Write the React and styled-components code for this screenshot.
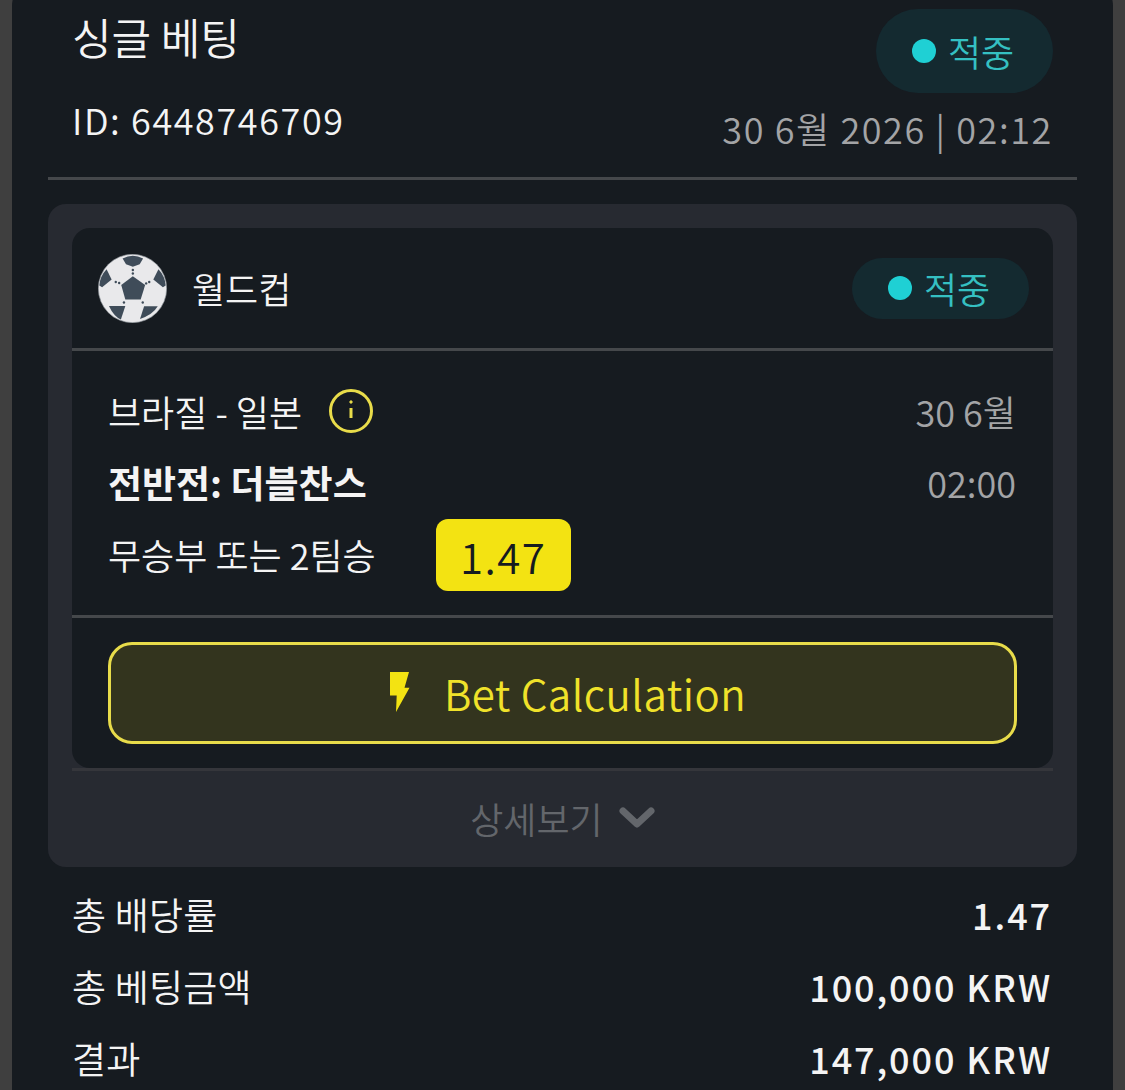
import React from 'react'
import styled, { createGlobalStyle } from 'styled-components'

const GlobalStyle = createGlobalStyle`
html, body {
  margin: 0;
  padding: 0;
  background: #3f3f3f;
}
* {
  box-sizing: border-box;
}
`
const Page = styled.div`
width: 1125px;
height: 1090px;
overflow: hidden;
padding: 0 12px;
font-family: "Noto Sans CJK KR", "Noto Sans", sans-serif;
font-weight: 350;
color: #f4f4f4;
`
const Ticket = styled.div`
margin-top: -24px;
height: 1200px;
padding: 24px 36px 0;
background: #161b20;
border-radius: 30px;
`
const Header = styled.header`
display: grid;
grid-template-columns: 1fr auto;
height: 180px;
padding: 0 24px 0 24px;
border-bottom: 3px solid #45484b;
`
const TitleBlock = styled.div`
display: flex;
flex-direction: column;
`
const Title = styled.h1`
margin: 6px 0 0;
height: 60px;
font-size: 43px;
line-height: 60px;
font-weight: 350;
`
const BetId = styled.div`
margin-top: 28px;
height: 50px;
font-size: 36px;
line-height: 50px;
letter-spacing: 1.6px;
`
const HeaderRight = styled.div`
display: flex;
flex-direction: column;
align-items: flex-end;
padding-top: 9px;
`
const Pill = styled.div`
display: flex;
align-items: center;
gap: 12px;
width: 177px;
height: ${p => p.$height}px;
padding-left: 36px;
border-radius: 42px;
background: #142a30;
color: #35c0c2;
font-size: 36px;
`
const Dot = styled.span`
width: 24px;
height: 24px;
border-radius: 50%;
background: #1fd0d4;
`
const DateText = styled.div`
margin-top: 10px;
font-size: 36px;
line-height: 50px;
letter-spacing: 1.6px;
color: #a3a4a6;
`
const Panel = styled.section`
margin-top: 24px;
height: 663px;
padding: 24px 24px 0;
background: #272a31;
border-radius: 18px;
`
const MatchCard = styled.div`
height: 540px;
background: #161b20;
border-radius: 18px;
`
const CardLip = styled.div`
height: 3px;
background: #35363b;
`
const League = styled.div`
display: flex;
align-items: center;
height: 123px;
padding: 0 24px 0 26px;
border-bottom: 3px solid #45484b;
`
const LeagueName = styled.span`
flex: 1;
margin-left: 25px;
font-size: 36px;
`
const MatchBody = styled.div`
display: grid;
grid-template-columns: 1fr auto;
grid-auto-rows: 72px;
align-items: center;
height: 267px;
padding: 24px 37px 0 36px;
border-bottom: 3px solid #45484b;
`
const Teams = styled.div`
display: flex;
align-items: center;
gap: 27px;
font-size: 36px;
`
const Market = styled.div`
margin-top: -2px;
font-size: 37px;
font-weight: 700;
`
const Selection = styled.div`
display: flex;
align-items: center;
gap: 60px;
font-size: 36px;
`
const SelectionLabel = styled.span`
margin-top: -2px;
`
const Odds = styled.span`
display: flex;
align-items: center;
justify-content: center;
width: 135px;
height: 72px;
border-radius: 12px;
background: #f3e312;
color: #161b20;
font-size: 42px;
letter-spacing: 1.5px;
`
const Muted = styled.span`
justify-self: end;
margin-top: ${p => p.$lift ? '-2px' : '0'};
color: #a3a4a6;
font-size: 36px;
`
const ButtonWrap = styled.div`
padding: 24px 36px;
`
const CalcButton = styled.button`
display: flex;
align-items: center;
justify-content: center;
gap: 34px;
width: 909px;
height: 102px;
padding: 0 0 2px 11px;
border: 3px solid #e8dc4a;
border-radius: 24px;
background: #33341e;
color: #f0e22a;
font-family: inherit;
font-size: 42px;
font-weight: 350;
letter-spacing: 0.45px;
`
const More = styled.div`
display: flex;
align-items: center;
justify-content: center;
gap: 16px;
height: 93px;
color: #63666b;
font-size: 36px;
`
const Summary = styled.div`
padding: 11px 25px 0 24px;
`
const SummaryRow = styled.div`
display: flex;
align-items: center;
justify-content: space-between;
height: 72px;
font-size: 37px;
letter-spacing: 0.2px;
`
const Amount = styled.span`
font-size: 36px;
font-weight: 500;
letter-spacing: 1.9px;
`

const Ball = () => (
  <svg width='69' height='69' viewBox='0 0 202 202'>
    <circle cx='101' cy='101' r='100' fill='#e9e9eb' stroke='#8f959b' strokeWidth='2' />
    <g fill='#3f4c59'>
      <path d='M102 65L138 91L125 133H80L68 91Z' />
      <path d='M72 13Q102 -3 132 13L122 30L102 37L82 30Z' />
      <path d='M25 45L40 75L12 97L4 92Q6 65 25 45Z' />
      <path d='M177 45L162 75L190 97L198 92Q196 65 177 45Z' />
      <path d='M32 152H80L67 192Q46 182 32 152Z' />
      <path d='M135 153H175Q160 178 123 190Z' />
      <circle cx='102' cy='47' r='3.5' />
      <circle cx='102' cy='57' r='3.5' />
      <circle cx='52' cy='82' r='3.5' />
      <circle cx='62' cy='85' r='3.5' />
      <circle cx='150' cy='82' r='3.5' />
      <circle cx='141' cy='86' r='3.5' />
      <circle cx='76' cy='142' r='3.5' />
      <circle cx='131' cy='142' r='3.5' />
    </g>
  </svg>
)

const InfoIcon = () => (
  <svg width='44' height='44' viewBox='0 0 44 44' fill='none' stroke='#e8dc4a'>
    <circle cx='22' cy='22' r='20.5' strokeWidth='3' />
    <path d='M22 19V29' strokeWidth='3' />
    <circle cx='22' cy='13' r='1.2' fill='#e8dc4a' strokeWidth='1' />
  </svg>
)

const Bolt = () => (
  <svg width='20' height='40' viewBox='0 0 20 38' preserveAspectRatio='none'>
    <path d='M0 0H19L14.5 15H19.5L6 38L6.7 22.4H0Z' fill='#f3e312' />
  </svg>
)

const Chevron = () => (
  <svg width='36' height='24' viewBox='0 0 36 24' fill='none'>
    <path d='M4 5L18 18L32 5' stroke='#63666b' strokeWidth='7' strokeLinecap='round' strokeLinejoin='round' />
  </svg>
)

const summary = [
  { label: '총 배당률', value: '1.47' },
  { label: '총 베팅금액', value: '100,000 KRW' },
  { label: '결과', value: '147,000 KRW' }
]

function App () {
  return (
    <Page>
      <GlobalStyle />
      <Ticket>
        <Header>
          <TitleBlock>
            <Title>싱글 베팅</Title>
            <BetId>ID: 6448746709</BetId>
          </TitleBlock>
          <HeaderRight>
            <Pill $height={84}><Dot />적중</Pill>
            <DateText>30 6월 2026 | 02:12</DateText>
          </HeaderRight>
        </Header>
        <Panel>
          <MatchCard>
            <League>
              <Ball />
              <LeagueName>월드컵</LeagueName>
              <Pill $height={61}><Dot />적중</Pill>
            </League>
            <MatchBody>
              <Teams>브라질 - 일본 <InfoIcon /></Teams>
              <Muted>30 6월</Muted>
              <Market>전반전: 더블찬스</Market>
              <Muted $lift>02:00</Muted>
              <Selection><SelectionLabel>무승부 또는 2팀승</SelectionLabel> <Odds>1.47</Odds></Selection>
            </MatchBody>
            <ButtonWrap>
              <CalcButton><Bolt />Bet Calculation</CalcButton>
            </ButtonWrap>
          </MatchCard>
          <CardLip />
          <More>상세보기 <Chevron /></More>
        </Panel>
        <Summary>
          {summary.map(row => (
            <SummaryRow key={row.label}>
              <span>{row.label}</span>
              <Amount>{row.value}</Amount>
            </SummaryRow>
          ))}
        </Summary>
      </Ticket>
    </Page>
  )
}

export default App
